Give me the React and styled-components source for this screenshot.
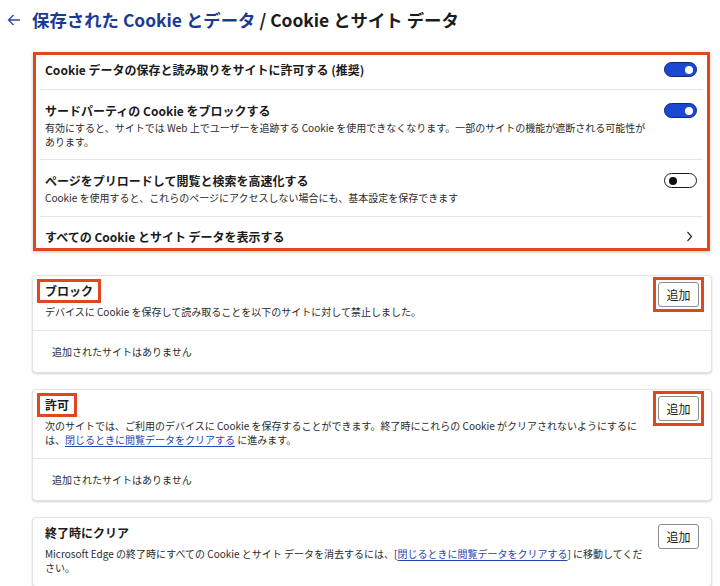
import styled, { createGlobalStyle } from "styled-components";

export default function App() {
  return (
    <>
      <Global />
      <Page>
        <Header>
          <BackArrow width="14" height="12" viewBox="0 0 14 12">
            <path d="M13 6H1.5M6.5 1L1.5 6l5 5" />
          </BackArrow>
          <Title>
            <Crumb>保存された Cookie とデータ</Crumb> / Cookie とサイト データ
          </Title>
        </Header>

        <MainCard>
          <Row>
            <RowText>
              <RowTitle>Cookie データの保存と読み取りをサイトに許可する (推奨)</RowTitle>
            </RowText>
            <Toggle $on />
          </Row>
          <Row>
            <RowText>
              <RowTitle>サードパーティの Cookie をブロックする</RowTitle>
              <Desc>
                有効にすると、サイトでは Web 上でユーザーを追跡する Cookie を使用できなくなります。一部のサイトの機能が遮断される可能性が
                <br />
                あります。
              </Desc>
            </RowText>
            <Toggle $on />
          </Row>
          <Row>
            <RowText>
              <RowTitle>ページをプリロードして閲覧と検索を高速化する</RowTitle>
              <Desc>Cookie を使用すると、これらのページにアクセスしない場合にも、基本設定を保存できます</Desc>
            </RowText>
            <Toggle />
          </Row>
          <LinkRow>
            <RowTitle>すべての Cookie とサイト データを表示する</RowTitle>
            <Chevron width="7" height="11" viewBox="0 0 7 11">
              <path d="M1.5 1l4 4.5-4 4.5" />
            </Chevron>
          </LinkRow>
        </MainCard>

        <SiteCard>
          <SiteHead>
            <SiteText>
              <SiteTitle $marked>ブロック</SiteTitle>
              <Desc>デバイスに Cookie を保存して読み取ることを以下のサイトに対して禁止しました。</Desc>
            </SiteText>
            <ButtonFrame $marked>
              <AddButton>追加</AddButton>
            </ButtonFrame>
          </SiteHead>
          <Empty>追加されたサイトはありません</Empty>
        </SiteCard>

        <SiteCard>
          <SiteHead>
            <SiteText>
              <SiteTitle $marked>許可</SiteTitle>
              <Desc>
                次のサイトでは、ご利用のデバイスに Cookie を保存することができます。終了時にこれらの Cookie がクリアされないようにするに
                <br />
                は、<TextLink>閉じるときに閲覧データをクリアする</TextLink> に進みます。
              </Desc>
            </SiteText>
            <ButtonFrame $marked>
              <AddButton>追加</AddButton>
            </ButtonFrame>
          </SiteHead>
          <Empty>追加されたサイトはありません</Empty>
        </SiteCard>

        <SiteCard>
          <SiteHead>
            <SiteText>
              <SiteTitle>終了時にクリア</SiteTitle>
              <Desc>
                Microsoft Edge の終了時にすべての Cookie とサイト データを消去するには、[<TextLink>閉じるときに閲覧データをクリアする</TextLink>] に移動してくだ
                <br />
                さい。
              </Desc>
            </SiteText>
            <ButtonFrame>
              <AddButton>追加</AddButton>
            </ButtonFrame>
          </SiteHead>
        </SiteCard>
      </Page>
    </>
  );
}

// Styling
const RED = "#e2461d";

const Global = createGlobalStyle`
  html, body {
    margin: 0;
    background: #ffffff;
  }
  body {
    font-family: "Noto Sans CJK JP", "Noto Sans", sans-serif;
    color: #1b1b1b;
    overflow: hidden;
  }
`;

const Page = styled.div`
  width: 720px;
  height: 586px;
  overflow: hidden;
`;

const Header = styled.div`
  display: flex;
  align-items: center;
  gap: 11px;
  height: 26px;
  padding: 7px 0 0 7px;
  margin-bottom: 19px;
`;

const BackArrow = styled.svg`
  flex: none;
  fill: none;
  stroke: #2c48a3;
  stroke-width: 1.3;
`;

const Title = styled.h1`
  margin: 0;
  font-size: 17.4px;
  font-weight: 700;
  line-height: 22px;
  white-space: nowrap;
  color: #1b1b1b;
`;

const Crumb = styled.span`
  color: #1c3a94;
`;

const MainCard = styled.div`
  margin: 0 10px 0 33px;
  border: 3px solid ${RED};
  background: #fff;
  box-shadow: 0 1px 3px rgba(0, 0, 0, 0.25);
`;

const Row = styled.div`
  display: flex;
  align-items: flex-start;
  justify-content: space-between;
  gap: 12px;
  margin: 0 4px;
  padding: 12px 6px 11px 5px;
  border-bottom: 1px solid #e6e6e6;
  &:first-child {
    padding-top: 6px;
  }
`;

const RowText = styled.div`
  display: flex;
  flex-direction: column;
  gap: 2px;
  min-width: 0;
`;

const RowTitle = styled.div`
  font-size: 12px;
  font-weight: 700;
  line-height: 17px;
  white-space: nowrap;
`;

const Desc = styled.div`
  font-size: 10px;
  line-height: 13.5px;
  color: #2b2b2b;
  white-space: nowrap;
`;

const Toggle = styled.span`
  position: relative;
  flex: none;
  width: 33px;
  height: 15px;
  margin-top: 1px;
  box-sizing: border-box;
  border-radius: 8px;
  border: ${(p) => (p.$on ? "1.5px solid #14247d" : "1px solid #1b1b1b")};
  background: ${(p) => (p.$on ? "#1a48d0" : "#ffffff")};
  &::after {
    content: "";
    position: absolute;
    top: 50%;
    width: 8px;
    height: 8px;
    margin-top: -4px;
    border-radius: 50%;
    background: ${(p) => (p.$on ? "#ffffff" : "#111111")};
    ${(p) => (p.$on ? "right: 3px;" : "left: 4px;")}
  }
`;

const LinkRow = styled.div`
  display: flex;
  align-items: center;
  justify-content: space-between;
  margin: 0 4px;
  padding: 11px 10px 3px 5px;
`;

const Chevron = styled.svg`
  flex: none;
  fill: none;
  stroke: #2a2a2a;
  stroke-width: 1.2;
`;

const SiteCard = styled.div`
  margin: 24px 0 0 32px;
  width: 680px;
  box-sizing: border-box;
  border: 1px solid #e2e2e2;
  border-radius: 4px;
  background: #fff;
  box-shadow: 0 1px 2px rgba(0, 0, 0, 0.18);
  & + & {
    margin-top: 16px;
  }
`;

const SiteHead = styled.div`
  display: flex;
  align-items: flex-start;
  justify-content: space-between;
  padding: 3px 7px 12px 12px;
`;

const SiteText = styled.div`
  display: flex;
  flex-direction: column;
  gap: 2px;
  min-width: 0;
`;

const SiteTitle = styled.div`
  width: fit-content;
  margin-left: -8px;
  padding: 0 5px;
  border: 3px solid ${(p) => (p.$marked ? RED : "transparent")};
  font-size: 12px;
  font-weight: 700;
  line-height: 18px;
`;

const ButtonFrame = styled.div`
  flex: none;
  margin-top: -2px;
  padding: 2px;
  border: 3px solid ${(p) => (p.$marked ? RED : "transparent")};
`;

const AddButton = styled.button`
  display: block;
  width: 41px;
  height: 25px;
  padding: 0;
  border: 1px solid #8c8c8c;
  border-radius: 3px;
  background: #fff;
  font-family: inherit;
  font-size: 12px;
  color: #1b1b1b;
  cursor: pointer;
`;

const TextLink = styled.a`
  color: #2547b3;
  text-decoration: underline;
  text-decoration-color: #2547b3;
  text-underline-offset: 2px;
  cursor: pointer;
`;

const Empty = styled.div`
  display: flex;
  align-items: center;
  height: 41px;
  padding: 0 19px;
  border-top: 1px solid #e6e6e6;
  font-size: 10px;
  color: #2b2b2b;
`;
